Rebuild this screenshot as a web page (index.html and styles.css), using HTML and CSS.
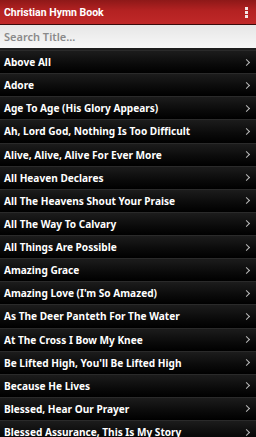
FILE: index.html
```html
<!DOCTYPE html>
<html>
<head>
<meta charset="utf-8">
<link rel="stylesheet" href="styles.css">
</head>
<body>
<div class="app">
  <header class="topbar">
    <span class="title">Christian Hymn Book</span>
    <span class="menu"><i></i><i></i><i></i></span>
  </header>
  <div class="search">Search Title...</div>
  <ul class="list">
    <li><span>Above All</span><b class="chev"></b></li>
    <li><span>Adore</span><b class="chev"></b></li>
    <li><span>Age To Age (His Glory Appears)</span><b class="chev"></b></li>
    <li><span>Ah, Lord God, Nothing Is Too Difficult</span><b class="chev"></b></li>
    <li><span>Alive, Alive, Alive For Ever More</span><b class="chev"></b></li>
    <li><span>All Heaven Declares</span><b class="chev"></b></li>
    <li><span>All The Heavens Shout Your Praise</span><b class="chev"></b></li>
    <li><span>All The Way To Calvary</span><b class="chev"></b></li>
    <li><span>All Things Are Possible</span><b class="chev"></b></li>
    <li><span>Amazing Grace</span><b class="chev"></b></li>
    <li><span>Amazing Love (I'm So Amazed)</span><b class="chev"></b></li>
    <li><span>As The Deer Panteth For The Water</span><b class="chev"></b></li>
    <li><span>At The Cross I Bow My Knee</span><b class="chev"></b></li>
    <li><span>Be Lifted High, You'll Be Lifted High</span><b class="chev"></b></li>
    <li><span>Because He Lives</span><b class="chev"></b></li>
    <li><span>Blessed, Hear Our Prayer</span><b class="chev"></b></li>
    <li><span>Blessed Assurance, This Is My Story</span><b class="chev"></b></li>
  </ul>
</div>
</body>
</html>
```
FILE: styles.css
```css
html, body {
  margin: 0;
  padding: 0;
  background: #000;
  overflow: hidden;
}
.app {
  width: 256px;
  height: 437px;
  overflow: hidden;
  font-family: "Noto Sans", "Open Sans", sans-serif;
}
.topbar {
  box-sizing: border-box;
  border-bottom: 1px solid #3a0a0a;
  height: 25px;
  background: linear-gradient(#8e1818, #b42222 45%, #c02828);
  display: flex;
  align-items: center;
  justify-content: space-between;
  padding: 0 4px 0 4px;
}
.title {
  color: #fff;
  font-family: Roboto, "Liberation Sans", sans-serif;
  font-weight: bold;
  font-size: 10.5px;
}
.menu {
  display: flex;
  flex-direction: column;
  gap: 1px;
  margin-right: 4px;
}
.menu i {
  display: block;
  width: 3px;
  height: 3px;
  background: #f4e8e8;
}
.search {
  box-sizing: border-box;
  background: linear-gradient(#e6e6e6, #f7f7f7);
  border-bottom: 2px solid #1e1e1e;
  color: #8a8a8a;
  font-family: "Noto Sans", sans-serif;
  font-weight: 600;
  font-size: 11px;
  padding-left: 4px;
  height: 25px;
  display: flex;
  align-items: center;
}
.list {
  list-style: none;
  margin: 0;
  padding: 0;
}
.list li {
  height: 23.125px;
  box-sizing: border-box;
  border-top: 1px solid #2a2a2a;
  background: linear-gradient(#1c1c1c, #0a0a0a 60%, #000);
  display: flex;
  align-items: center;
  justify-content: space-between;
  padding: 0 5px 0 4px;
  color: #fff;
  font-weight: bold;
  font-size: 10.1px;
}
.chev {
  width: 4px;
  height: 4px;
  border-right: 1.5px solid #bbb;
  border-top: 1.5px solid #bbb;
  transform: rotate(45deg);
  margin-right: 2px;
}
```
